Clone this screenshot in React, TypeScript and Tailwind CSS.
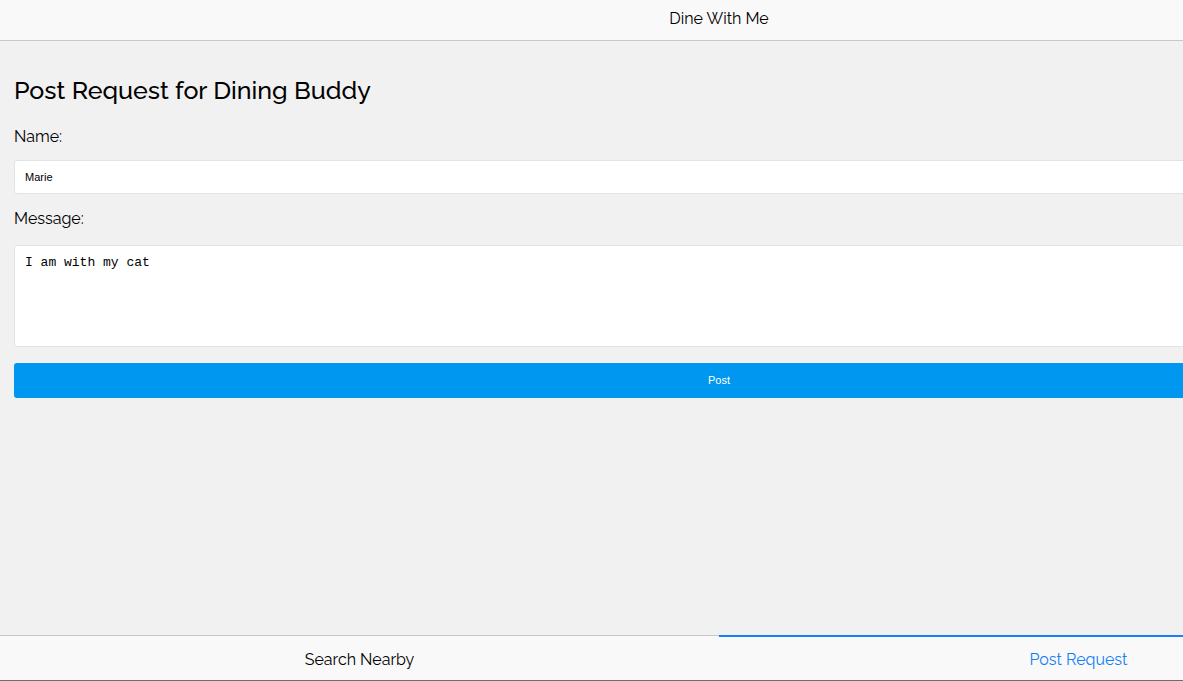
export default function App() {
  const font = { fontFamily: "Raleway, Lato, 'Noto Sans', sans-serif" }
  return (
    <div className="h-screen overflow-hidden bg-[#f1f1f1]">
      <div className="w-[1438px] h-full flex flex-col text-black" style={font}>
        <header className="h-[41px] shrink-0 bg-[#f9f9f9] border-b border-[#c8c8c8] flex items-center justify-center">
          <span className="text-[16px] -mt-[2px]">Dine With Me</span>
        </header>

        <main className="flex-1 px-[14px] pt-[34px]">
          <h1 className="text-[25px] font-medium leading-[30px]">Post Request for Dining Buddy</h1>
          <label className="block mt-[22px] text-[16px] leading-[20px]">Name:</label>
          <input
            className="mt-[13px] w-full h-[34px] bg-white border border-[#e3e3e3] rounded-[3px] px-[10px] text-[11px] outline-none"
            style={{ fontFamily: "'Liberation Sans', Arial, sans-serif" }}
            defaultValue="Marie"
          />
          <label className="block mt-[15px] text-[16px] leading-[20px]">Message:</label>
          <textarea
            className="mt-[16px] block w-full h-[102px] bg-white border border-[#e3e3e3] rounded-[3px] px-[10px] pt-[7px] text-[13px] outline-none resize-none"
            style={{ fontFamily: "'Liberation Mono', 'Courier New', monospace" }}
            defaultValue="I am with my cat"
          />
          <button
            className="mt-[16px] w-full h-[35px] bg-[#0097f0] rounded-[3px] text-white text-[11px]"
            style={{ fontFamily: "'Liberation Sans', Arial, sans-serif" }}
          >
            Post
          </button>
        </main>

        <nav className="h-[46px] shrink-0 bg-[#f9f9f9] border-t border-[#c8c8c8] border-b border-b-[#6e6e6e] flex">
          <div className="flex-1 flex items-center justify-center pt-[3px] text-[16px]">Search Nearby</div>
          <div className="flex-1 flex items-center justify-center pt-[3px] text-[16px] text-[#1580f5] border-t-2 border-[#1580f5] -mt-px">
            Post Request
          </div>
        </nav>
      </div>
    </div>
  )
}
